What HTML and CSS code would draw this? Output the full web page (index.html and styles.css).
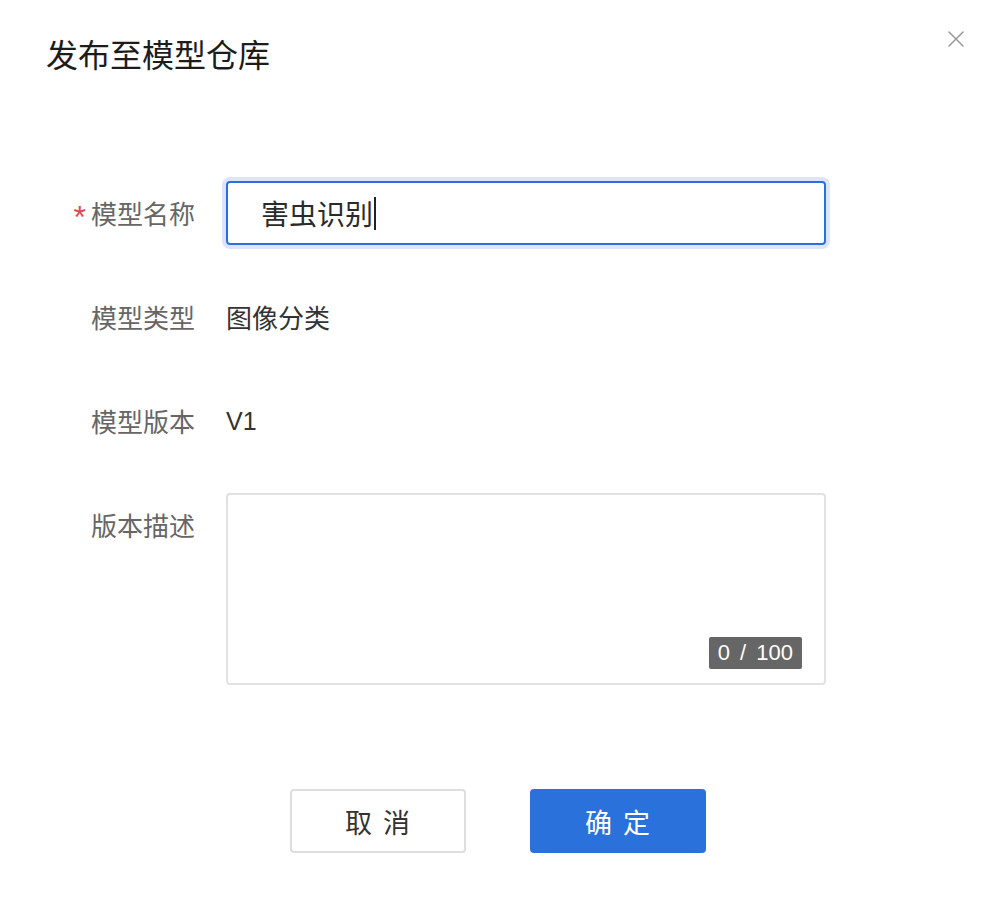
FILE: index.html
```html
<!DOCTYPE html>
<html lang="zh-CN">
<head>
<meta charset="utf-8">
<title>发布至模型仓库</title>
<link rel="stylesheet" href="styles.css">
</head>
<body>
<div class="dialog">
  <div class="header">
    <h1 class="title">发布至模型仓库</h1>
    <button class="close" aria-label="关闭">
      <svg width="16" height="16" viewBox="0 0 16 16"><path d="M1 1 L15 15 M15 1 L1 15" stroke="#9a9a9a" stroke-width="1.5" fill="none" stroke-linecap="round"/></svg>
    </button>
  </div>
  <div class="form">
    <div class="row">
      <div class="label"><span class="req">*</span>模型名称</div>
      <div class="control">
        <div class="input">害虫识别<span class="caret"></span></div>
      </div>
    </div>
    <div class="row">
      <div class="label">模型类型</div>
      <div class="control value">图像分类</div>
    </div>
    <div class="row">
      <div class="label">模型版本</div>
      <div class="control value latin">V1</div>
    </div>
    <div class="row">
      <div class="label">版本描述</div>
      <div class="control">
        <div class="textarea">
          <span class="count">0 / 100</span>
        </div>
      </div>
    </div>
  </div>
  <div class="footer">
    <button class="btn btn-cancel">取消</button>
    <button class="btn btn-primary">确定</button>
  </div>
</div>
</body>
</html>
```
FILE: styles.css
```css
* { box-sizing: border-box; }
html, body {
  margin: 0;
  padding: 0;
  background: #ffffff;
}
body {
  font-family: "Liberation Sans", "Noto Sans CJK SC", sans-serif;
  color: #333333;
}
.dialog {
  width: 993px;
  height: 899px;
  padding: 29px 0 0 0;
}
.header {
  display: flex;
  justify-content: space-between;
  align-items: flex-start;
  height: 48px;
  padding: 0 29px 0 46px;
}
.title {
  margin: 0;
  font-family: "Noto Sans CJK SC", sans-serif;
  font-size: 32px;
  line-height: 48px;
  font-weight: 400;
  color: #1c1c1c;
}
.close {
  border: none;
  background: none;
  padding: 0;
  margin-top: 2px;
  width: 16px;
  height: 16px;
  cursor: pointer;
}
.form {
  margin-top: 104px;
  display: flex;
  flex-direction: column;
  gap: 40px;
}
.row {
  display: flex;
  align-items: flex-start;
}
.label {
  width: 195px;
  height: 64px;
  flex: none;
  text-align: right;
  font-family: "Noto Sans CJK SC", sans-serif;
  font-size: 26px;
  line-height: 64px;
  color: #666666;
}
.req {
  color: #e0484e;
  font-family: "Liberation Sans", sans-serif;
  font-size: 32px;
  line-height: 0;
  margin-right: 5px;
  vertical-align: -4px;
}
.control {
  margin-left: 31px;
  width: 600px;
}
.value {
  height: 64px;
  font-family: "Noto Sans CJK SC", sans-serif;
  font-size: 26px;
  line-height: 64px;
  color: #333333;
}
.value.latin {
  font-family: "Liberation Sans", "Noto Sans CJK SC", sans-serif;
  font-size: 25px;
}
.input {
  height: 64px;
  border: 2px solid #2c6fdb;
  border-radius: 4px;
  box-shadow: 0 0 0 4px #dce5fb;
  padding: 0 33px;
  display: flex;
  align-items: center;
  font-family: "Noto Sans CJK SC", sans-serif;
  font-size: 28px;
  color: #2a2a2a;
}
.caret {
  display: inline-block;
  width: 2px;
  height: 33px;
  background: #222222;
  margin-left: 1px;
}
.textarea {
  height: 192px;
  border: 2px solid #e2e2e2;
  border-radius: 4px;
  display: flex;
  align-items: flex-end;
  justify-content: flex-end;
  padding: 0 22px 14px 0;
}
.count {
  background: #666666;
  color: #ffffff;
  font-family: "Liberation Sans", sans-serif;
  font-size: 22px;
  line-height: 32px;
  height: 32px;
  padding: 0 9px;
  word-spacing: 4px;
  border-radius: 2px;
}
.footer {
  margin-top: 104px;
  display: flex;
  justify-content: center;
  gap: 64px;
  padding-left: 2px;
}
.btn {
  width: 176px;
  height: 64px;
  border-radius: 4px;
  font-family: "Noto Sans CJK SC", sans-serif;
  font-size: 27px;
  letter-spacing: 11px;
  text-indent: 11px;
  cursor: pointer;
}
.btn-cancel {
  background: #ffffff;
  border: 2px solid #dedede;
  color: #333333;
}
.btn-primary {
  background: #2b71dc;
  border: 2px solid #2b71dc;
  color: #ffffff;
}
```
